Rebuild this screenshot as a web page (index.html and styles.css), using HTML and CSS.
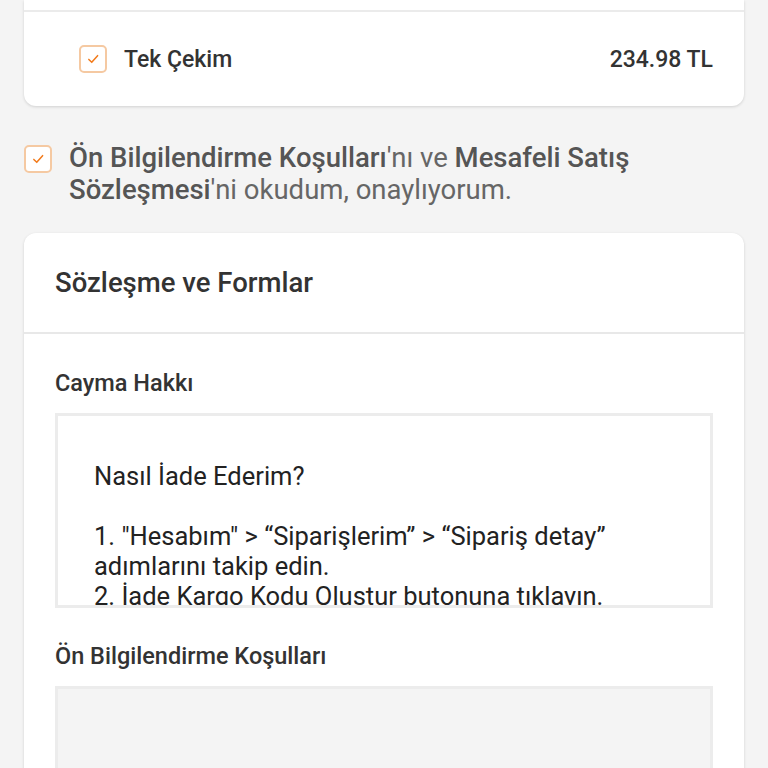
FILE: index.html
```html
<!DOCTYPE html>
<html lang="tr">

<head>
    <meta charset="UTF-8">
    <meta name="viewport" content="width=device-width, initial-scale=1.0">
    <title>Ödeme</title>
    <link rel="stylesheet" href="styles.css">
</head>

<body>

    <div class="page">
        <!-- Taksit secenekleri -->
        <div class="card installments">
            <div class="card-top"></div>
            <div class="option-row">
                <span class="checkbox">
                    <svg viewBox="0 0 24 24" width="20" height="20">
                        <path d="M7 12.5l3.5 3.5 7-8" fill="none" stroke="#f27a1a" stroke-width="1.8" stroke-linecap="round" stroke-linejoin="round"/>
                    </svg>
                </span>
                <span class="option-label">Tek Çekim</span>
                <span class="option-price">234.98 TL</span>
            </div>
        </div>

        <!-- Onay -->
        <div class="agreement">
            <span class="checkbox">
                <svg viewBox="0 0 24 24" width="20" height="20">
                    <path d="M7 12.5l3.5 3.5 7-8" fill="none" stroke="#f27a1a" stroke-width="1.8" stroke-linecap="round" stroke-linejoin="round"/>
                </svg>
            </span>
            <p><strong>Ön Bilgilendirme Koşulları</strong>'nı ve <strong>Mesafeli Satış Sözleşmesi</strong>'ni okudum, onaylıyorum.</p>
        </div>

        <!-- Sozlesme ve formlar -->
        <div class="card contracts">
            <div class="card-header">
                <h2>Sözleşme ve Formlar</h2>
            </div>
            <div class="card-body">
                <h3>Cayma Hakkı</h3>
                <div class="contract-box">
                    <p>Nasıl İade Ederim?</p>
                    <br>
                    <p>1. "Hesabım" &gt; “Siparişlerim” &gt; “Sipariş detay” adımlarını takip edin.</p>
                    <p>2. İade Kargo Kodu Oluştur butonuna tıklayın.</p>
                    <p>3. Size verilen kargo kodu ile ürünü kargoya teslim edin.</p>
                </div>

                <h3>Ön Bilgilendirme Koşulları</h3>
                <div class="contract-box empty"></div>
            </div>
        </div>
    </div>

</body>

</html>
```

FILE: styles.css
```css
body {
    font-family: 'Roboto', 'Liberation Sans', sans-serif;
    margin: 0;
    padding: 0;
    background: #f4f4f4;
    color: #333;
}

.page {
    padding: 0 24px;
}

.card {
    background: #fff;
    border-radius: 12px;
    box-shadow: 0 1px 3px rgba(0, 0, 0, 0.15);
}

.installments {
    border-radius: 0 0 12px 12px;
}

.card-top {
    height: 10px;
    border-bottom: 2px solid #ebebeb;
}

.option-row {
    display: flex;
    align-items: center;
    height: 94px;
    padding: 0 31px 0 55px;
    box-sizing: border-box;
}

.checkbox {
    width: 28px;
    height: 28px;
    box-sizing: border-box;
    border: 2px solid #f5c9a2;
    border-radius: 5px;
    display: flex;
    align-items: center;
    justify-content: center;
    flex-shrink: 0;
    background: #fff;
}

.option-label {
    margin-left: 17px;
    font-size: 23px;
    font-weight: 500;
    color: #333;
    flex-grow: 1;
}

.option-price {
    font-size: 23px;
    font-weight: 500;
    color: #333;
}

.agreement {
    display: flex;
    align-items: flex-start;
    margin: 39px 0 0;
}

.agreement p {
    margin: -3px 0 0 17px;
    font-size: 27.5px;
    line-height: 32px;
    color: #666;
}

.agreement strong {
    font-weight: 500;
    color: #555;
}

.contracts {
    margin-top: 27px;
    border-radius: 12px 12px 0 0;
    min-height: 600px;
}

.card-header {
    height: 101px;
    display: flex;
    align-items: center;
    padding: 0 31px;
    border-bottom: 2px solid #e8e8e8;
    box-sizing: border-box;
}

.card-header h2 {
    margin: 0;
    font-size: 27.5px;
    font-weight: 500;
    color: #333;
}

.card-body {
    padding: 36px 31px 0;
}

.card-body h3 {
    margin: 0 0 17px;
    font-size: 23.5px;
    font-weight: 500;
    color: #333;
    line-height: 26px;
}

.contract-box {
    height: 195px;
    box-sizing: border-box;
    border: 3px solid #ececec;
    padding: 45px 36px 0;
    overflow: hidden;
    font-size: 25.5px;
    line-height: 30px;
    color: #222;
    margin-bottom: 35px;
}

.contract-box p {
    margin: 0;
}

.contract-box.empty {
    background: #f4f4f4;
}
```
